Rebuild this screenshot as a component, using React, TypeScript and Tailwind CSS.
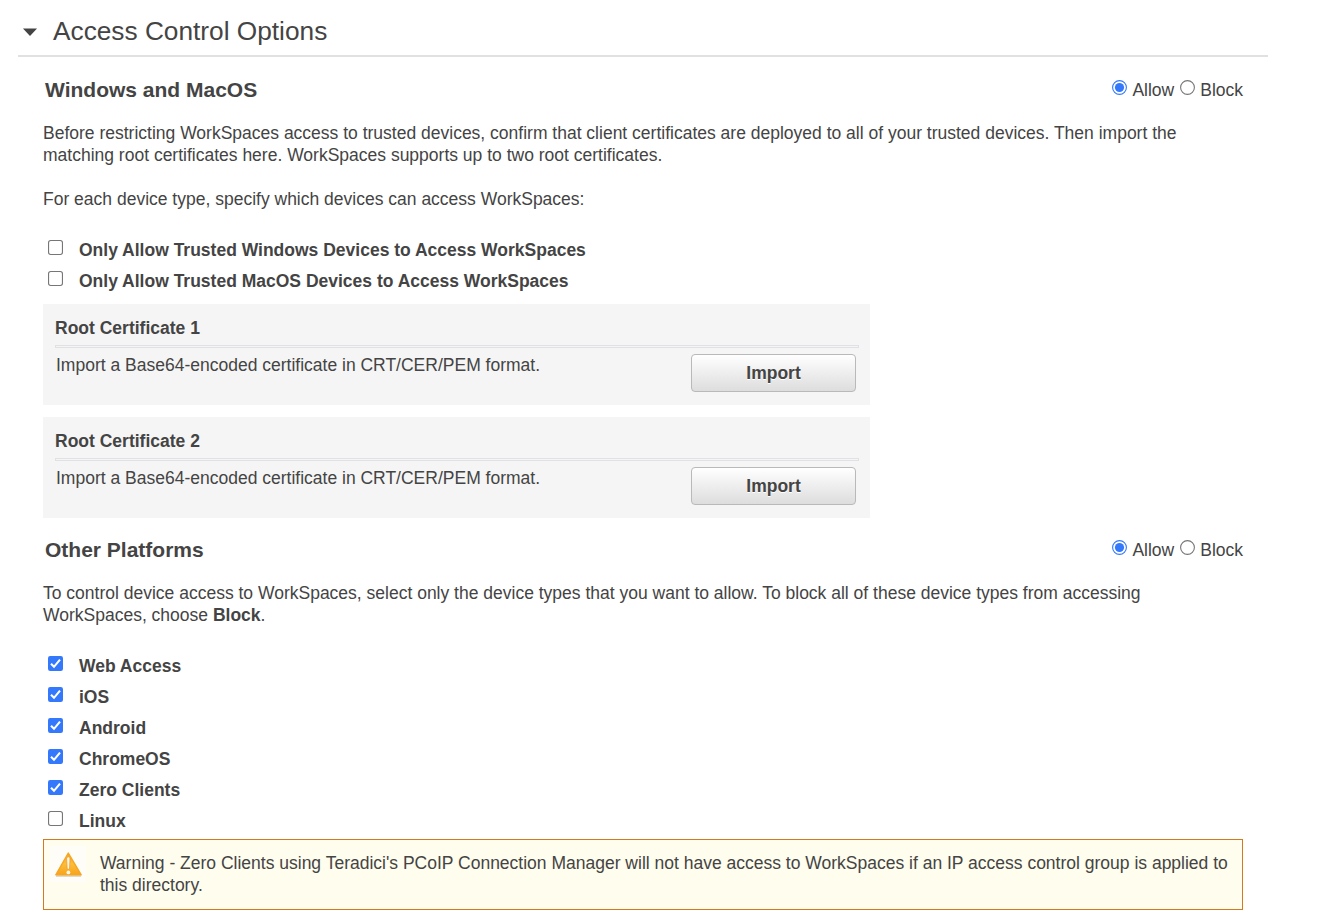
import { useState } from "react";

function Radio({ label, checked, onSelect }: { label: string; checked: boolean; onSelect: () => void }) {
  return (
    <button type="button" role="radio" aria-checked={checked} onClick={onSelect} className="flex h-[22px] items-start">
      <svg width="15" height="15" viewBox="0 0 15 15" className="mt-[1px] shrink-0">
        <circle cx="7.5" cy="7.5" r="6.9" fill="#fff" stroke={checked ? "#3478fb" : "#767676"} strokeWidth="1.1" />
        {checked && <circle cx="7.5" cy="7.5" r="4.6" fill="#3478fb" />}
      </svg>
      <span className="ml-[5px]">{label}</span>
    </button>
  );
}

function AccessToggle() {
  const [allow, setAllow] = useState(true);
  return (
    <div role="radiogroup" className="mt-[1px] flex gap-[6px]">
      <Radio label="Allow" checked={allow} onSelect={() => setAllow(true)} />
      <Radio label="Block" checked={!allow} onSelect={() => setAllow(false)} />
    </div>
  );
}

function SectionHeading({ title }: { title: string }) {
  return (
    <div className="flex h-[24px] w-[1200px] items-start justify-between pl-[2px]">
      <h2 className="text-[21px] leading-[24px] font-bold">{title}</h2>
      <AccessToggle />
    </div>
  );
}

function CheckRow({ label, initial = false }: { label: string; initial?: boolean }) {
  const [checked, setChecked] = useState(initial);
  return (
    <button
      type="button"
      role="checkbox"
      aria-checked={checked}
      onClick={() => setChecked(!checked)}
      className="flex h-[31px] items-start pl-[5px] font-bold"
    >
      <svg width="15" height="15" viewBox="0 0 15 15" className="mt-[6px] shrink-0">
        {checked ? (
          <>
            <rect width="15" height="15" rx="2.2" fill="#3478fb" />
            <path d="M3 7.8 L6 10.8 L12 3.6" fill="none" stroke="#fff" strokeWidth="2.1" />
          </>
        ) : (
          <rect x="0.55" y="0.55" width="13.9" height="13.9" rx="2.2" fill="#fff" stroke="#767676" strokeWidth="1.1" />
        )}
      </svg>
      <span className="ml-[16px] pt-[5px] leading-[22px]">{label}</span>
    </button>
  );
}

function CertificatePanel({ index }: { index: number }) {
  return (
    <div className="h-[101px] w-[827px] bg-[#f5f5f5] pt-[13px] pr-[11px] pl-[12px]">
      <h3 className="font-bold">Root Certificate {index}</h3>
      <div className="mt-[6px] h-[3px] border border-[#e0e0e5]" />
      <div className="flex justify-between pr-[3px] pl-[1px]">
        <p className="pt-[6px]">Import a Base64-encoded certificate in CRT/CER/PEM format.</p>
        <button
          type="button"
          className="mt-[6px] h-[38px] w-[165px] rounded-[4px] border border-[#b9b9b9] bg-linear-to-b from-white to-[#dddddd] font-bold [text-shadow:0_1px_0_#fff]"
        >
          Import
        </button>
      </div>
    </div>
  );
}

function WarningIcon() {
  return (
    <svg width="36" height="36" viewBox="0 0 36 36" className="shrink-0">
      <defs>
        <linearGradient id="warning-fill" x1="0" y1="0" x2="0" y2="1">
          <stop offset="0" stopColor="#f6a21c" />
          <stop offset="0.5" stopColor="#fdbd3a" />
          <stop offset="1" stopColor="#f8a31d" />
        </linearGradient>
      </defs>
      <rect width="36" height="36" fill="#fffdf8" />
      <path d="M6 30 H31" stroke="#b9a88a" strokeWidth="1.2" opacity="0.7" />
      <path d="M18.3 7 L31.2 28.8 H5.8 Z" fill="url(#warning-fill)" stroke="#f5a623" strokeWidth="1.4" strokeLinejoin="round" />
      <path d="M16.6 12 Q18.3 9.6 20 12 L19.5 22.6 Q18.3 24 17.2 22.6 Z" fill="#fff6e6" stroke="#e8921c" strokeWidth="0.6" />
      <circle cx="18.4" cy="26.4" r="1.9" fill="#fff6e6" />
    </svg>
  );
}

export default function App() {
  return (
    <main className="h-[919px] w-[1343px] overflow-hidden bg-white font-['Liberation_Sans',Arial,sans-serif] text-[17.5px] leading-[22px] text-[#444444]">
      <header className="ml-[18px] flex h-[57px] w-[1250px] items-start border-b-2 border-[#e1e1e1] pl-[5px]">
        <svg width="14" height="8" viewBox="0 0 14 8" className="mt-[28px]">
          <path d="M0 0.4 H14 L7 8 Z" fill="#444" />
        </svg>
        <h1 className="ml-[16px] pt-[16px] text-[26.25px] leading-[30px]">Access Control Options</h1>
      </header>

      <section className="ml-[43px] pt-[21px]">
        <SectionHeading title="Windows and MacOS" />
        <p className="mt-[20px] whitespace-nowrap">
          Before restricting WorkSpaces access to trusted devices, confirm that client certificates are deployed to all of your trusted devices. Then import the
          <br />
          matching root certificates here. WorkSpaces supports up to two root certificates.
        </p>
        <p className="mt-[22px]">For each device type, specify which devices can access WorkSpaces:</p>
        <div className="mt-[24px]">
          <CheckRow label="Only Allow Trusted Windows Devices to Access WorkSpaces" />
          <CheckRow label="Only Allow Trusted MacOS Devices to Access WorkSpaces" />
        </div>
        <div className="mt-[8px] flex flex-col gap-3">
          <CertificatePanel index={1} />
          <CertificatePanel index={2} />
        </div>
      </section>

      <section className="ml-[43px] pt-[20px]">
        <SectionHeading title="Other Platforms" />
        <p className="mt-[20px] whitespace-nowrap">
          To control device access to WorkSpaces, select only the device types that you want to allow. To block all of these device types from accessing
          <br />
          WorkSpaces, choose <strong>Block</strong>.
        </p>
        <div className="mt-[24px]">
          <CheckRow label="Web Access" initial />
          <CheckRow label="iOS" initial />
          <CheckRow label="Android" initial />
          <CheckRow label="ChromeOS" initial />
          <CheckRow label="Zero Clients" initial />
          <CheckRow label="Linux" />
        </div>
        <div className="mt-[3px] flex h-[71px] w-[1200px] items-start border border-[#d5791d] bg-[#fffded] pt-[6px] pl-[6px]">
          <WarningIcon />
          <p className="ml-[14px] pt-[6px] whitespace-nowrap">
            Warning - Zero Clients using Teradici's PCoIP Connection Manager will not have access to WorkSpaces if an IP access control group is applied to
            <br />
            this directory.
          </p>
        </div>
      </section>
    </main>
  );
}
